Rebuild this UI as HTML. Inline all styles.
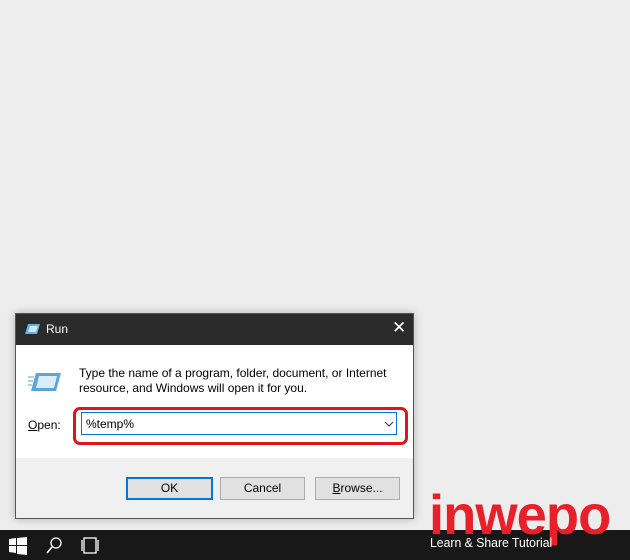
<!DOCTYPE html><html><head><style>
body{margin:0;width:630px;height:560px;background:#ededed;position:relative;overflow:hidden;font-family:"Liberation Sans",sans-serif}
.a{position:absolute}
.dlg{left:15px;top:313px;width:397px;height:204px;background:#f0f0f0;border:1px solid #555;box-shadow:0 0 8px rgba(0,0,0,.25)}
.btn{top:163px;height:21px;width:83px;background:#e1e1e1;border:1px solid #adadad;font-size:12px;text-align:center;line-height:21px;color:#000}
</style></head><body>
<div class="a dlg">
 <div class="a" style="left:0;top:0;width:397px;height:31px;background:#2b2b2b"></div>
 <svg class="a" style="left:9px;top:8px" width="16" height="14"><path d="M3 2h12l-3 10H0z" fill="#6aaee0"/><path d="M5 4h8l-2 6H3z" fill="#cfe6f7"/></svg>
 <div class="a" style="left:30px;top:8px;color:#fff;font-size:12px">Run</div>
 <div class="a" style="left:376px;top:4px;color:#fff;font-size:17px">✕</div>
 <div class="a" style="left:0;top:31px;width:397px;height:113px;background:#fff"></div>
 <svg class="a" style="left:12px;top:57px" width="34" height="22"><path d="M8 2h25l-5 18H3z" fill="#5aa5dc"/><path d="M11 5h18l-3 12H8z" fill="#dcedf9"/><path d="M0 6h6M0 10h5M0 14h4" stroke="#8cc4ea" stroke-width="1.5"/></svg>
 <div class="a" style="left:63px;top:52px;font-size:12px;line-height:15px;color:#000">Type the name of a program, folder, document, or Internet<br>resource, and Windows will open it for you.</div>
 <div class="a" style="left:12px;top:104px;font-size:12px"><u>O</u>pen:</div>
 <div class="a" style="left:57px;top:93px;width:329px;height:32px;border:3px solid #e3131b;border-radius:7px"></div>
 <div class="a" style="left:65px;top:98px;width:316px;height:23px;border:1px solid #0078d7;background:#fff;font-size:12px;line-height:23px;padding-left:4px;box-sizing:border-box">%temp%</div>
 <svg class="a" style="left:368px;top:107px" width="10" height="6"><path d="M1 1l4 4 4-4" stroke="#333" fill="none"/></svg>
 <div class="a btn" style="left:110px;border:2px solid #0078d7;height:19px;line-height:19px">OK</div>
 <div class="a btn" style="left:204px">Cancel</div>
 <div class="a btn" style="left:299px"><u>B</u>rowse...</div>
</div>
<div class="a" style="left:0;top:530px;width:630px;height:30px;background:#181818"></div>
<svg class="a" style="left:9px;top:537px" width="18" height="18"><path d="M0 2l7-1v7H0zM8 1l10-1v8H8zM0 9h7v7l-7-1zM8 9h10v9l-10-1z" fill="#fff"/></svg>
<svg class="a" style="left:45px;top:536px" width="18" height="18"><circle cx="11" cy="7" r="5" stroke="#fff" fill="none" stroke-width="1.3"/><path d="M7 11l-5 6" stroke="#fff" stroke-width="1.5"/></svg>
<svg class="a" style="left:80px;top:537px" width="21" height="17"><rect x="4" y="1" width="12" height="15" stroke="#fff" fill="none" stroke-width="1.3"/><path d="M2 3v11M18 3v11" stroke="#fff" stroke-width="1.3"/></svg>
<div class="a" style="left:429px;top:487px;font-size:56px;line-height:56px;font-weight:bold;color:#e8202a;letter-spacing:-1px;transform:scaleX(0.97);transform-origin:0 0;white-space:nowrap">inwepo</div>
<div class="a" style="left:430px;top:535px;font-size:13px;color:#fff;transform:scaleX(0.94);transform-origin:0 0;white-space:nowrap">Learn &amp; Share Tutorial</div>
</body></html>
